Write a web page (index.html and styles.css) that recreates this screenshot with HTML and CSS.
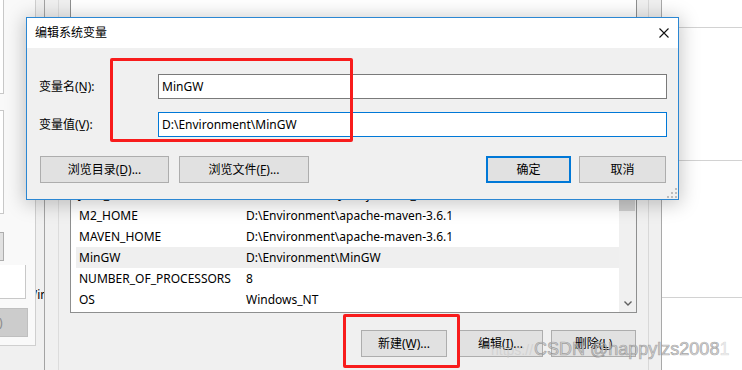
FILE: index.html
```html
<!DOCTYPE html>
<html lang="zh-CN">
<head>
<meta charset="utf-8">
<title>编辑系统变量</title>
<link rel="stylesheet" href="styles.css">
</head>
<body>
<div class="desk">
  <div class="sysprops">
    <div class="sp-panel">
      <div class="sp-box sp-box-a"></div>
      <div class="sp-box sp-box-b"></div>
      <div class="sp-btn sp-btn-a"></div>
      <div class="sp-box sp-box-c"></div>
      <div class="sp-btn sp-btn-b">)</div>
    </div>
    <span class="sp-text">Windows</span>
  </div>

  <div class="page-right">
    <div class="pr-block pr-b1"></div>
    <div class="pr-block pr-b2"></div>
    <div class="pr-block pr-b3"></div>
  </div>

  <div class="envwin">
    <div class="env-body">
      <div class="user-list"></div>
      <div class="sys-list">
        <div class="rows">
          <div class="row"><span class="c1">JAVA_HOME</span><span class="c2">D:\Environment\Java\jdk1.8.0_231</span></div>
          <div class="row"><span class="c1">M2_HOME</span><span class="c2">D:\Environment\apache-maven-3.6.1</span></div>
          <div class="row"><span class="c1">MAVEN_HOME</span><span class="c2">D:\Environment\apache-maven-3.6.1</span></div>
          <div class="row row-sel"><span class="c1">MinGW</span><span class="c2">D:\Environment\MinGW</span></div>
          <div class="row"><span class="c1">NUMBER_OF_PROCESSORS</span><span class="c2">8</span></div>
          <div class="row"><span class="c1">OS</span><span class="c2">Windows_NT</span></div>
        </div>
        <div class="vscroll">
          <div class="vs-arrow"></div>
          <div class="vs-thumb"></div>
          <div class="vs-fill"></div>
          <div class="vs-arrow">
            <svg width="8" height="5" viewBox="0 0 8 5"><path d="M0.5 0.5 L4 4 L7.5 0.5" fill="none" stroke="#606060" stroke-width="1.4"/></svg>
          </div>
        </div>
      </div>
      <div class="env-buttons">
        <div class="btn env-btn-new">新建(W̲)...</div>
        <div class="btn env-btn-edit">编辑(I̲)...</div>
        <div class="btn env-btn-del">删除(L̲)</div>
      </div>
    </div>
  </div>

  <div class="dialog">
    <div class="dlg-title">
      <span class="dlg-title-text">编辑系统变量</span>
      <svg class="dlg-close" width="10" height="10" viewBox="0 0 10 10"><path d="M0.5 0.5 L9.5 9.5 M9.5 0.5 L0.5 9.5" stroke="#111" stroke-width="1.1" fill="none"/></svg>
    </div>
    <div class="dlg-body">
      <div class="field-row field-row-1">
        <div class="field-label">变量名(N̲):</div>
        <div class="field-input">MinGW</div>
      </div>
      <div class="field-row field-row-2">
        <div class="field-label">变量值(V̲):</div>
        <div class="field-input field-input-focus">D:\Environment\MinGW</div>
      </div>
      <div class="dlg-buttons">
        <div class="btn dbtn-dir">浏览目录(D̲)...</div>
        <div class="btn dbtn-file">浏览文件(F̲)...</div>
        <div class="dbtn-spacer"></div>
        <div class="btn dbtn-ok">确定</div>
        <div class="btn dbtn-cancel">取消</div>
      </div>
    </div>
    <svg class="grip" width="10" height="10" viewBox="0 0 10 10">
      <rect x="8" y="0" width="2" height="2" fill="#bcbcbc"/>
      <rect x="4" y="4" width="2" height="2" fill="#bcbcbc"/>
      <rect x="8" y="4" width="2" height="2" fill="#bcbcbc"/>
      <rect x="0" y="8" width="2" height="2" fill="#bcbcbc"/>
      <rect x="4" y="8" width="2" height="2" fill="#bcbcbc"/>
      <rect x="8" y="8" width="2" height="2" fill="#bcbcbc"/>
    </svg>
  </div>

  <div class="mark mark-1"></div>
  <div class="mark mark-2"></div>

  <div class="watermark"><span class="wm-small">https://</span><span class="wm-big">CSDN @happylzs2008</span><span class="wm-fade">1</span></div>
</div>
</body>
</html>
```

FILE: styles.css
```css
* { box-sizing: border-box; }
html, body { margin: 0; padding: 0; }
body {
  width: 742px;
  height: 370px;
  overflow: hidden;
  background: #ffffff;
  font-family: "Noto Sans", "Noto Sans CJK SC", sans-serif;
  font-size: 12px;
  color: #000;
}

.desk {
  position: relative;
  width: 742px;
  height: 370px;
  overflow: hidden;
}

/* ---------- system properties window (behind) ---------- */
.sysprops {
  position: absolute;
  z-index: 0;
  left: 0;
  top: 0;
  width: 662px;
  height: 370px;
  background: #f0f0f0;
  border-right: 1px solid #a9a9a9;
  display: flex;
}
.sp-panel {
  position: relative;
  z-index: 1;
  width: 36px;
  height: 346px;
  background: #f9f9f9;
  border-right: 1px solid #cfcfcf;
  border-bottom: 1px solid #cfcfcf;
  display: flex;
  flex-direction: column;
}
.sp-box {
  background: #ffffff;
  border-right: 1px solid #c8c8c8;
  border-bottom: 1px solid #c8c8c8;
}
.sp-box-a { width: 4px; height: 94px; }
.sp-box-b { width: 4px; height: 104px; margin-top: 16px; border-top: 1px solid #c8c8c8; }
.sp-btn {
  background: #e1e1e1;
  border: 1px solid #adadad;
  border-left: none;
}
.sp-btn-a { width: 4px; height: 29px; margin-top: 18px; }
.sp-box-c { width: 26px; height: 34px; margin-top: 4px; }
.sp-btn-b {
  width: 28px;
  height: 29px;
  margin-top: 9px;
  background: #cccccc;
  border-color: #bfbfbf;
  color: #8a8a8a;
  line-height: 27px;
  text-indent: -1px;
}
.sp-text {
  position: absolute;
  left: 26px;
  top: 287px;
  line-height: 16px;
}

/* ---------- page at right ---------- */
.page-right {
  position: absolute;
  left: 662px;
  top: 0;
  width: 80px;
  height: 370px;
  background: #ffffff;
  display: flex;
  flex-direction: column;
}
.pr-block { border-bottom: 1px solid #d2d2d2; }
.pr-b1 { height: 28px; }
.pr-b2 { height: 133px; }
.pr-b3 { height: 137px; }

/* ---------- environment variables window ---------- */
.envwin {
  position: absolute;
  left: 44px;
  top: 0;
  width: 605px;
  height: 370px;
  background: #f0f0f0;
  border-left: 1px solid #a3a3a3;
  border-right: 1px solid #d8d8d8;
  display: flex;
}
.env-body {
  flex: 1;
  margin-left: 13px;
  border-left: 1px solid #dcdcdc;
  padding: 0 11px;
  display: flex;
  flex-direction: column;
}
.user-list {
  height: 130px;
  background: #ffffff;
  border: 1px solid #8e8f8f;
  border-top: none;
  margin-bottom: 30px;
}
.sys-list {
  height: 153px;
  background: #ffffff;
  border: 1px solid #8e8f8f;
  display: flex;
}
.rows {
  flex: 1;
  padding: 23px 0 2px 5px;
}
.row {
  height: 21px;
  display: flex;
  align-items: center;
  padding-left: 3px;
  white-space: nowrap;
  line-height: 16px;
}
.row-sel { background: #efefef; }
.c1 { width: 167px; flex: none; }
.vscroll {
  width: 17px;
  background: #f0f0f0;
  display: flex;
  flex-direction: column;
}
.vs-arrow {
  height: 17px;
  display: flex;
  align-items: center;
  justify-content: center;
}
.vs-thumb {
  height: 33px;
  margin-right: 1px;
  background: #cdcdcd;
}
.vs-fill { flex: 1; }

.env-buttons {
  margin-top: 17px;
  display: flex;
  justify-content: flex-end;
  padding-right: 1px;
}
.btn {
  height: 27px;
  background: #e1e1e1;
  border: 1px solid #adadad;
  display: flex;
  align-items: center;
  justify-content: center;
  white-space: nowrap;
  line-height: 16px;
}
.env-btn-new { width: 86px; }
.env-btn-edit { width: 85px; margin-left: 11px; }
.env-btn-del { width: 85px; margin-left: 8px; }

/* ---------- edit dialog ---------- */
.dialog {
  position: absolute;
  z-index: 2;
  left: 26px;
  top: 17px;
  width: 653px;
  height: 183px;
  background: #f0f0f0;
  border: 1px solid #2b87d3;
  box-shadow: 0 2px 18px 2px rgba(0, 0, 0, 0.22);
  display: flex;
  flex-direction: column;
}
.dlg-title {
  height: 30px;
  background: #ffffff;
  display: flex;
  align-items: center;
  justify-content: space-between;
  padding-left: 8px;
  padding-right: 9px;
  flex: none;
}
.dlg-title-text { line-height: 16px; }
.dlg-close { display: block; }
.dlg-body {
  padding: 0 11px 0 12px;
  display: flex;
  flex-direction: column;
}
.field-row {
  display: flex;
  align-items: center;
}
.field-row-1 { margin-top: 26px; }
.field-row-2 { margin-top: 13px; }
.field-label {
  width: 119px;
  flex: none;
  line-height: 16px;
}
.field-input {
  flex: 1;
  height: 25px;
  background: #ffffff;
  border: 1px solid #7a7a7a;
  padding-left: 3px;
  display: flex;
  align-items: center;
  line-height: 16px;
}
.field-input-focus { border-color: #0078d7; }

.dlg-buttons {
  margin-top: 19px;
  display: flex;
}
.dbtn-dir { width: 129px; margin-left: 1px; }
.dbtn-file { width: 130px; margin-left: 10px; }
.dbtn-spacer { flex: 1; }
.dbtn-ok { width: 85px; border: 2px solid #0078d7; }
.dbtn-cancel { width: 87px; margin-left: 8px; margin-right: 1px; }

.grip {
  position: absolute;
  right: 1px;
  bottom: 1px;
}

/* ---------- red annotation boxes ---------- */
.mark {
  position: absolute;
  z-index: 3;
  border: 3px solid #f81c1c;
  border-radius: 2px;
}
.mark-1 { left: 110px; top: 58px; width: 243px; height: 84px; }
.mark-2 { left: 343px; top: 314px; width: 117px; height: 54px; }

/* ---------- watermark ---------- */
.watermark {
  position: absolute;
  z-index: 4;
  left: 491px;
  top: 339px;
  font-family: "Liberation Sans", Arial, sans-serif;
  white-space: nowrap;
  line-height: 20px;
  display: flex;
  align-items: baseline;
}
.wm-small {
  font-size: 14px;
  color: rgba(200, 200, 200, 0.6);
  margin-right: 1px;
}
.wm-big {
  font-size: 18px;
  color: rgba(205, 205, 205, 0.75);
  -webkit-text-stroke: 0.7px rgba(110, 110, 110, 0.55);
}
.wm-fade {
  font-size: 18px;
  color: rgba(230, 230, 230, 0.6);
  -webkit-text-stroke: 0.5px rgba(170, 170, 170, 0.4);
}
```
